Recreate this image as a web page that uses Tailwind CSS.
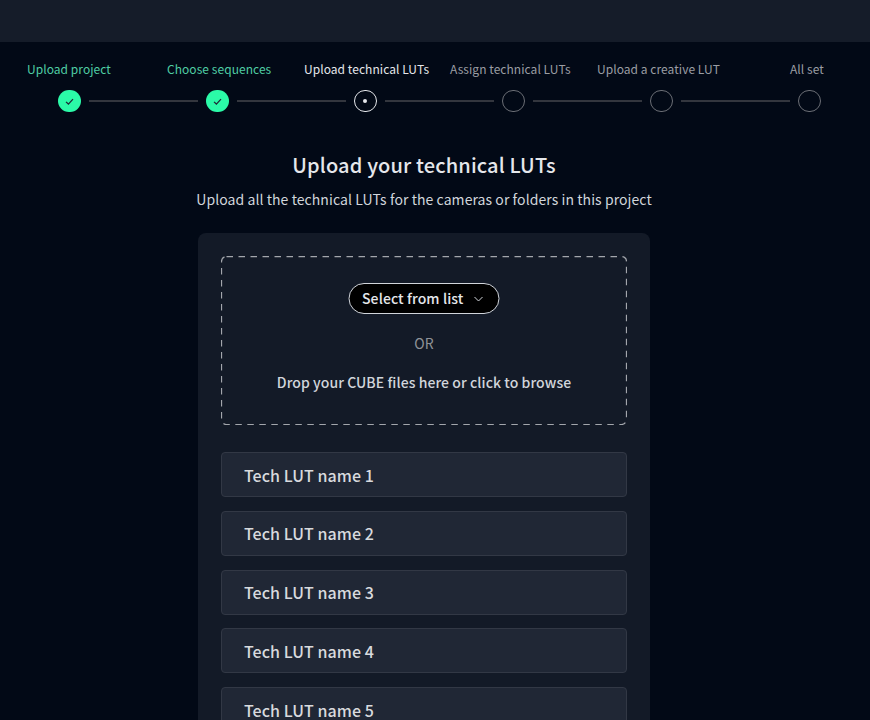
<!DOCTYPE html>
<html lang="en">
<head>
    <meta charset="UTF-8">
    <meta name="viewport" content="width=device-width, initial-scale=1.0">
    <title>Upload your technical LUTs</title>
    <script src="https://cdn.jsdelivr.net/npm/@tailwindcss/browser@4"></script>
</head>
<body class="bg-[#020916] h-[720px] overflow-hidden font-['Noto_Sans_CJK_SC','Noto_Sans',sans-serif]">
    <header class="h-[42px] bg-[#151c29]"></header>

    <!-- stepper -->
    <div class="flex pt-[18px] pl-[27px] h-[37px] text-[12px] tracking-[0.05px] leading-[18px] whitespace-nowrap">
        <span class="w-[84px] text-[#4fcda4]">Upload project</span>
        <span class="w-[104px] ml-[56px] text-[#4fcda4]">Choose sequences</span>
        <span class="w-[125px] ml-[33px] text-[#e5e7eb]">Upload technical LUTs</span>
        <span class="w-[121px] ml-[21px] text-[#9a9da3]">Assign technical LUTs</span>
        <span class="w-[123px] ml-[26px] text-[#9a9da3]">Upload a creative LUT</span>
        <span class="w-[34px] ml-[70px] text-[#9a9da3]">All set</span>
    </div>
    <div class="flex items-center pl-[58px] pt-[10px] h-[34px]">
        <div class="w-[22.5px] h-[22.5px] rounded-full bg-[#2bfaa8] flex items-center justify-center">
            <svg width="11" height="11" viewBox="0 0 12 12" fill="none" stroke="#1f2937" stroke-width="1.4"><path d="M2.2 6.4 4.8 8.8 9.8 3.4"/></svg>
        </div>
        <div class="w-[108.5px] h-[2px] bg-[#33363e] mx-[8.5px]"></div>
        <div class="w-[22.5px] h-[22.5px] rounded-full bg-[#2bfaa8] flex items-center justify-center">
            <svg width="11" height="11" viewBox="0 0 12 12" fill="none" stroke="#1f2937" stroke-width="1.4"><path d="M2.2 6.4 4.8 8.8 9.8 3.4"/></svg>
        </div>
        <div class="w-[108.5px] h-[2px] bg-[#33363e] mx-[8.5px]"></div>
        <div class="w-[22.5px] h-[22.5px] rounded-full border border-[#e5e7eb] flex items-center justify-center">
            <div class="w-[4px] h-[4px] rounded-full bg-[#e5e7eb]"></div>
        </div>
        <div class="w-[108.5px] h-[2px] bg-[#33363e] mx-[8.5px]"></div>
        <div class="w-[22.5px] h-[22.5px] rounded-full border border-[#6b6e75]"></div>
        <div class="w-[108.5px] h-[2px] bg-[#33363e] mx-[8.5px]"></div>
        <div class="w-[22.5px] h-[22.5px] rounded-full border border-[#6b6e75]"></div>
        <div class="w-[108.5px] h-[2px] bg-[#33363e] mx-[8.5px]"></div>
        <div class="w-[22.5px] h-[22.5px] rounded-full border border-[#6b6e75]"></div>
    </div>

    <main class="w-[452px] ml-[198px]">
        <h1 class="mt-[38px] text-center text-[20px] tracking-[0.15px] leading-[28px] font-medium text-[#e5e7eb] -mx-10">Upload your technical LUTs</h1>
        <p class="mt-[9px] text-center text-[14px] tracking-[0.07px] leading-[22px] text-[#d1d5db] -mx-10">Upload all the technical LUTs for the cameras or folders in this project</p>

        <section class="mt-[23px] bg-[#131a27] rounded-lg px-[23px] pt-[23px] pb-6">
            <div class="relative h-[169px] flex flex-col items-center">
                <svg class="absolute inset-0" width="406" height="169" fill="none"><rect x="0.5" y="0.5" width="405" height="168" rx="5" stroke="#a3a6ac" stroke-width="1.25" stroke-dasharray="6.5 5.5"/></svg>
                <button class="mt-[27px] -translate-x-[0.5px] h-[31px] w-[151px] rounded-full bg-black border border-[#d1d5db] text-[#e5e7eb] text-[14px] tracking-[0.1px] font-medium flex items-center pl-[13px]">
                    Select from list
                    <svg class="ml-[10px]" width="10" height="10" viewBox="0 0 10 10" fill="none" stroke="#d1d5db" stroke-width="1"><path d="M1 3 5 7 9 3"/></svg>
                </button>
                <span class="mt-[19px] text-[14px] leading-[20px] text-[#8f9298]">OR</span>
                <span class="mt-[19px] text-[14px] tracking-[0.07px] leading-[20px] font-medium text-[#d1d5db]">Drop your CUBE files here or click to browse</span>
            </div>

            <ul class="mt-[27px] flex flex-col gap-[13.8px]">
                <li class="h-[45px] pl-[22px] flex items-center bg-[#202735] border border-[#323845] rounded text-[16px] tracking-[0.07px] font-medium text-[#d8dade]">Tech LUT name 1</li>
                <li class="h-[45px] pl-[22px] flex items-center bg-[#202735] border border-[#323845] rounded text-[16px] tracking-[0.07px] font-medium text-[#d8dade]">Tech LUT name 2</li>
                <li class="h-[45px] pl-[22px] flex items-center bg-[#202735] border border-[#323845] rounded text-[16px] tracking-[0.07px] font-medium text-[#d8dade]">Tech LUT name 3</li>
                <li class="h-[45px] pl-[22px] flex items-center bg-[#202735] border border-[#323845] rounded text-[16px] tracking-[0.07px] font-medium text-[#d8dade]">Tech LUT name 4</li>
                <li class="h-[45px] pl-[22px] flex items-center bg-[#202735] border border-[#323845] rounded text-[16px] tracking-[0.07px] font-medium text-[#d8dade]">Tech LUT name 5</li>
            </ul>
        </section>
    </main>
</body>
</html>
